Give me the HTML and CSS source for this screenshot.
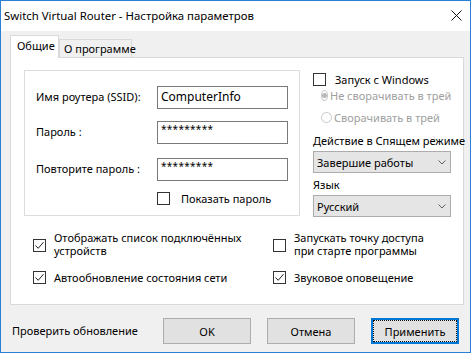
FILE: index.html
```html
<!DOCTYPE html>
<html lang="ru">
<head>
  <meta charset="UTF-8">
  <title>Switch Virtual Router</title>
  <link rel="stylesheet" href="styles.css">
</head>
<body>
  <div class="window">
    <div class="titlebar">
      <span class="title">Switch Virtual Router - Настройка параметров</span>
      <svg class="close" width="11" height="11" viewBox="0 0 11 11">
        <path d="M0.5 0.5 L10.5 10.5 M10.5 0.5 L0.5 10.5" stroke="#111" stroke-width="1" fill="none"/>
      </svg>
    </div>

    <div class="client">
      <div class="tabs">
        <div class="tab active">Общие</div>
        <div class="tab">О программе</div>
      </div>

      <div class="panel">
        <div class="top">
          <div class="group">
            <div class="field">
              <span class="label">Имя роутера (SSID):</span>
              <div class="input">ComputerInfo</div>
            </div>
            <div class="field f2">
              <span class="label">Пароль :</span>
              <div class="input pass">*********</div>
            </div>
            <div class="field f3">
              <span class="label">Повторите пароль :</span>
              <div class="input pass">*********</div>
            </div>
            <div class="check show-pass">
              <span class="box"></span>
              <span>Показать пароль</span>
            </div>
          </div>

          <div class="side">
            <div class="check">
              <span class="box"></span>
              <span>Запуск с Windows</span>
            </div>
            <div class="radio r1">
              <span class="dot checked"></span>
              <span>Не сворачивать в трей</span>
            </div>
            <div class="radio r2">
              <span class="dot"></span>
              <span>Сворачивать в трей</span>
            </div>
            <div class="caption">Действие в Спящем режиме</div>
            <div class="combo">
              <span>Завершие работы</span>
              <svg width="8" height="5" viewBox="0 0 8 5"><path d="M0.5 0.5 L4 4 L7.5 0.5" stroke="#606060" fill="none"/></svg>
            </div>
            <div class="caption lang">Язык</div>
            <div class="combo">
              <span>Русский</span>
              <svg width="8" height="5" viewBox="0 0 8 5"><path d="M0.5 0.5 L4 4 L7.5 0.5" stroke="#606060" fill="none"/></svg>
            </div>
          </div>
        </div>

        <div class="options">
          <div class="check multi">
            <span class="box on"><svg width="11" height="11" viewBox="0 0 11 11"><path d="M1.5 5.5 L4.2 8.3 L9.5 2.2" stroke="#222" fill="none"/></svg></span>
            <span class="lines"><span>Отображать список подключённых</span><span>устройств</span></span>
          </div>
          <div class="check multi">
            <span class="box"></span>
            <span class="lines"><span>Запускать точку доступа</span><span>при старте программы</span></span>
          </div>
          <div class="check">
            <span class="box on"><svg width="11" height="11" viewBox="0 0 11 11"><path d="M1.5 5.5 L4.2 8.3 L9.5 2.2" stroke="#222" fill="none"/></svg></span>
            <span>Автообновление состояния сети</span>
          </div>
          <div class="check">
            <span class="box on"><svg width="11" height="11" viewBox="0 0 11 11"><path d="M1.5 5.5 L4.2 8.3 L9.5 2.2" stroke="#222" fill="none"/></svg></span>
            <span>Звуковое оповещение</span>
          </div>
        </div>
      </div>

      <div class="footer">
        <span class="link">Проверить обновление</span>
        <div class="buttons">
          <button>OK</button>
          <button>Отмена</button>
          <button class="default">Применить</button>
        </div>
      </div>
    </div>
  </div>
</body>
</html>
```

FILE: styles.css
```css
body {
  margin: 0;
  background: #ffffff;
  font-family: "Segoe UI", "Noto Sans", sans-serif;
  font-size: 11px;
  color: #000;
}

.window {
  width: 471px;
  height: 353px;
  box-sizing: border-box;
  border: 1px solid #2b80d6;
  display: flex;
  flex-direction: column;
}

.titlebar {
  height: 29px;
  flex: none;
  display: flex;
  align-items: center;
  justify-content: space-between;
  padding: 0 8px 1px 3px;
  background: #fff;
}

.title {
  font-size: 11.4px;
}

.client {
  flex: 1;
  background: #f0f0f0;
  padding: 4px 0 0 9px;
  display: flex;
  flex-direction: column;
  white-space: nowrap;
}

/* tabs */
.tabs {
  display: flex;
  align-items: flex-end;
  height: 22px;
  flex: none;
}

.tab {
  box-sizing: border-box;
  height: 18px;
  width: 73px;
  border: 1px solid #d9d9d9;
  border-bottom: none;
  background: #f0f0f0;
  padding-left: 4px;
  line-height: 17px;
}

.tab.active {
  position: relative;
  z-index: 1;
  width: 49px;
  height: 23px;
  margin-bottom: -1px;
  background: #fff;
  padding-left: 6px;
  line-height: 20px;
}

.panel {
  flex: none;
  width: 454px;
  height: 248px;
  box-sizing: border-box;
  border: 1px solid #d9d9d9;
  background: #fff;
  padding: 12px 0 0 13px;
}

.top {
  display: flex;
  gap: 13px;
}

/* group box with fields */
.group {
  width: 276px;
  height: 146px;
  box-sizing: border-box;
  border: 1px solid #dcdcdc;
  padding: 15px 0 0 11px;
}

.field {
  display: flex;
  align-items: center;
}

.f2 { margin-top: 12px; }
.f3 { margin-top: 14px; }

.label {
  width: 121px;
  margin-top: -2px;
}

.input {
  width: 131px;
  height: 23px;
  box-sizing: border-box;
  border: 1px solid #7a7a7a;
  padding-left: 3px;
  line-height: 20px;
  font-size: 12px;
}

.input.pass {
  font-size: 10px;
  line-height: 14px;
  letter-spacing: 0.3px;
}

.check {
  display: flex;
  align-items: center;
  gap: 8px;
  line-height: 13px;
}

.show-pass {
  margin: 11px 0 0 121px;
  gap: 11px;
}

.box {
  width: 13px;
  height: 13px;
  box-sizing: border-box;
  border: 1px solid #333;
  background: #fff;
  flex: none;
  display: flex;
  align-items: center;
  justify-content: center;
}

/* right column */
.side {
  width: 138px;
  padding-top: 3px;
}

.side .check {
  gap: 9px;
}

.radio {
  display: flex;
  align-items: center;
  gap: 2px;
  padding-left: 8px;
  color: #a0a0a0;
  line-height: 13px;
}

.r1 { margin-top: 3px; }
.r2 { margin-top: 9px; }

.dot {
  width: 11px;
  height: 11px;
  box-sizing: border-box;
  border: 1px solid #c8c8c8;
  border-radius: 50%;
  display: flex;
  align-items: center;
  justify-content: center;
}

.dot.checked::after {
  content: "";
  width: 5px;
  height: 5px;
  border-radius: 50%;
  background: #b8b8b8;
}

.caption {
  margin-top: 9px;
  line-height: 16px;
}

.caption.lang {
  margin-top: 4px;
}

.combo {
  height: 22px;
  box-sizing: border-box;
  border: 1px solid #acacac;
  background: #e5e5e5;
  display: flex;
  align-items: center;
  justify-content: space-between;
  padding: 0 4px 0 3px;
  margin-top: 2px;
}

/* bottom options */
.options {
  margin: 14px 0 0 9px;
  display: grid;
  grid-template-columns: 240px 1fr;
  row-gap: 14px;
}

.options .check {
  gap: 8px;
}

.lines {
  display: flex;
  flex-direction: column;
}

.options .multi .box {
  margin-top: 3px;
}

.footer {
  flex: 1;
  display: flex;
  align-items: flex-start;
  justify-content: space-between;
  padding: 13px 11px 0 2px;
}

.link {
  line-height: 26px;
}

.buttons {
  display: flex;
  gap: 16px;
}

button {
  width: 88px;
  height: 26px;
  border: 1px solid #adadad;
  background: #e1e1e1;
  font-family: inherit;
  font-size: 11px;
  color: #000;
  padding: 0;
}

button.default {
  border: 1px solid #0078d7;
  box-shadow: inset 0 0 0 1px #0078d7;
  outline: 1px dotted #111;
  outline-offset: -3px;
}
```
